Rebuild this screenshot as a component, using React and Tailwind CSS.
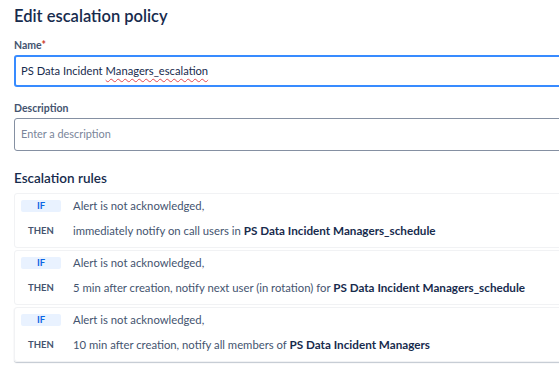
export default function App() {
  const rules = [
    { then: 'immediately notify on call users in ', target: 'PS Data Incident Managers_schedule' },
    { then: '5 min after creation, notify next user (in rotation) for ', target: 'PS Data Incident Managers_schedule' },
    { then: '10 min after creation, notify all members of ', target: 'PS Data Incident Managers' },
  ]

  return (
    <div
      className="w-[559px] h-[367px] overflow-hidden bg-white text-[#172b4d]"
      style={{ fontFamily: 'Lato, "Noto Sans", sans-serif' }}
    >
      <div className="pl-[14px] pt-[3px] w-[640px]">
        <h1 className="text-[16.5px] font-semibold leading-[26px]">Edit escalation policy</h1>

        {/* Name */}
        <div className="mt-[10px] text-[10.5px] font-bold text-[#44546f] leading-[12px]">
          Name<span className="text-[#c9372c]">*</span>
        </div>
        <div className="mt-[4px] h-[32px] border-2 border-[#388bff] rounded-[3px] flex items-center px-[5px] text-[11.2px] text-[#172b4d]">
          PS Data Incident{' '}
          <span className="ml-[3px] underline decoration-wavy decoration-[#e5484d] decoration-1 underline-offset-[3px]">
            Managers_escalation
          </span>
        </div>

        {/* Description */}
        <div className="mt-[15px] text-[10.5px] font-bold text-[#44546f] leading-[12px]">Description</div>
        <div className="mt-[4px] h-[33px] border border-[#8590a2] rounded-[3px] flex items-center px-[6px] text-[10.9px] text-[#7a869a]">
          Enter a description
        </div>

        <h2 className="mt-[18px] text-[13.5px] font-semibold leading-[18px]">Escalation rules</h2>

        <div className="mt-[6px] flex flex-col gap-[2px]">
          {rules.map((r, i) => (
            <div
              key={i}
              className={`h-[55px] rounded-[3px] border border-[#f1f2f4] flex flex-col gap-[10px] pt-[5px] pl-[6px] ${
                i === rules.length - 1 ? 'shadow-[0_1px_1px_rgba(9,30,66,0.25)]' : ''
              }`}
            >
              <div className="flex items-center">
                <span className="w-[40px] h-[12px] rounded-[2px] bg-[#e9f2ff] text-[#0c66e4] text-[9.5px] font-bold flex items-center justify-center leading-none">
                  IF
                </span>
                <span className="ml-[12px] text-[11.3px] text-[#44546f] leading-[14px]">Alert is not acknowledged,</span>
              </div>
              <div className="flex items-center">
                <span className="w-[40px] h-[12px] text-[#44546f] text-[9.5px] font-bold flex items-center justify-center leading-none">
                  THEN
                </span>
                <span className="ml-[12px] text-[11.3px] text-[#44546f] leading-[14px]">
                  {r.then}
                  <span className="font-bold text-[11.7px] text-[#172b4d]">{r.target}</span>
                </span>
              </div>
            </div>
          ))}
        </div>
      </div>
    </div>
  )
}
